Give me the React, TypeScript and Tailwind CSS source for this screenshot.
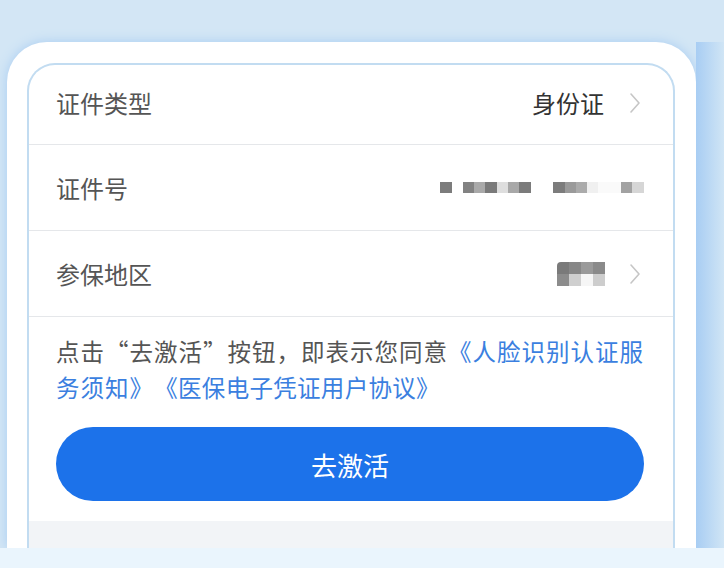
import React from 'react';

const font = { fontFamily: '"Noto Sans CJK SC", "Noto Sans", sans-serif' };

// 打码块：[宽, 颜色]
const idBlocks: [number, string][] = [
  [12, '#7c7c7c'], [11, '#ffffff'], [11, '#828282'], [11, '#a9a9a9'], [12, '#7a7a7a'],
  [11, '#dedede'], [11, '#a8a8a8'], [12, '#7b7b7b'], [22, '#ffffff'], [12, '#7c7c7c'],
  [11, '#9a9a9a'], [11, '#ababab'], [11, '#f0f0f0'], [23, '#fafafa'], [11, '#a2a2a2'], [12, '#d6d6d6'],
];

const Chevron = ({ gap = 'ml-[20px]' }: { gap?: string }) => (
  <svg width="12" height="22" viewBox="0 0 12 22" className={`${gap} shrink-0`}>
    <polyline points="2,2 10,11 2,20" fill="none" stroke="#c6c6c6" strokeWidth="1.6" strokeLinejoin="round" strokeLinecap="round" />
  </svg>
);

const Row = ({ label, children, first }: { label: string; children: React.ReactNode; first?: boolean }) => (
  <div className={`flex items-center justify-between pl-[27px] pr-[32px] border-b border-[#e5e7ea] ${first ? 'h-[80px] pb-[4px]' : 'h-[86px]'}`}>
    <span className="text-[24px] text-[#555555]">{label}</span>
    <div className="flex items-center">{children}</div>
  </div>
);

export default function App() {
  return (
    <div className="w-[724px] h-[568px] overflow-hidden flex flex-col bg-[#d3e6f5]" style={font}>
      <div className="flex-1 flex pt-[42px] pl-[7px]">
        <div className="w-[689px] h-[506px] bg-white rounded-t-[40px] pt-[21px] pl-[20px] pr-[21px] shadow-[0_0_12px_#a9cdf2] overflow-hidden">
          <div className="h-full border-2 border-b-0 border-[#c2dcf1] rounded-t-[28px] flex flex-col overflow-hidden">
            <Row label="证件类型" first>
              <span className="text-[24px] text-[#333333]">身份证</span>
              <Chevron gap="ml-[25px]" />
            </Row>
            <Row label="证件号">
              <div className="flex h-[11px] mr-[-3px]">
                {idBlocks.map(([w, c], i) => (
                  <div key={i} style={{ width: w, background: c }} />
                ))}
              </div>
            </Row>
            <Row label="参保地区">
              <div className="grid grid-cols-4 w-[48px] h-[24px] rounded-tl-[4px] overflow-hidden mr-[4px]">
                <div className="bg-[#7a7a7a]" />
                <div className="bg-[#878787]" />
                <div className="bg-[#9a9a9a]" />
                <div className="bg-[#8a8a8a]" />
                <div className="bg-[#8c8c8c]" />
                <div className="bg-[#cfcfcf]" />
                <div className="bg-[#f6f6f6]" />
                <div className="bg-[#cdcdcd]" />
              </div>
              <Chevron />
            </Row>
            <div className="pl-[27px] pr-[27px] pt-[16px]">
              <p className="text-[23.5px] leading-[36px] text-[#555555] tracking-[1px]">
                点击“去激活”按钮，即表示您同意<span className="text-[#3b7fe0]">《人脸识别认证服务须知》<span className="ml-[12px] tracking-[0.3px]">《医保电子凭证用户协议》</span></span>
              </p>
              <button className="mt-[22px] w-[588px] h-[74px] rounded-full bg-[#1c72ea] text-white text-[26px] flex items-center justify-center">
                去激活
              </button>
            </div>
            <div className="mt-[20px] flex-1 bg-[#f2f4f7]" />
          </div>
        </div>
        <div className="flex-1 bg-gradient-to-r from-[#a8cdf3] to-[#d0e5f5]" />
      </div>
      <div className="h-[20px] bg-[#eaf5fd]" />
    </div>
  );
}
